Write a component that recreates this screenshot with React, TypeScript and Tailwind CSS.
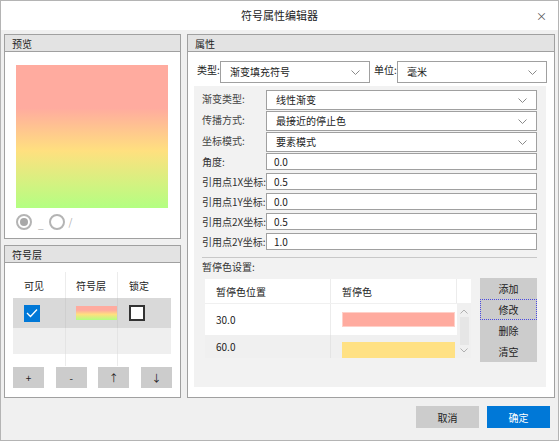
import React from 'react';

const font = { fontFamily: '"Noto Sans CJK SC", "Noto Sans", sans-serif' };

const Chevron: React.FC = () => (
  <svg width="9" height="5" viewBox="0 0 9 5" className="flex-shrink-0">
    <path d="M0.5 0.5 L4.5 4.5 L8.5 0.5" fill="none" stroke="#8a8a8a" strokeWidth="1" />
  </svg>
);

const Combo: React.FC<{ value: string; className?: string }> = ({ value, className = '' }) => (
  <div className={`flex items-center justify-between bg-white border border-[#a0a0a0] pl-[9px] pr-[9px] ${className}`}>
    <span className="text-[10px] text-[#222] leading-none">{value}</span>
    <Chevron />
  </div>
);

const Panel: React.FC<{ title: string; className?: string; children: React.ReactNode }> = ({ title, className = '', children }) => (
  <div className={`flex flex-col border border-[#a0a0a0] bg-white ${className}`}>
    <div className="h-[17px] bg-[#e3e3e3] border-b border-[#a0a0a0] pl-[7px] flex items-center text-[10px] text-[#222] flex-shrink-0">
      {title}
    </div>
    {children}
  </div>
);

const gradient = 'linear-gradient(to bottom, #ffab9f 30%, #ffe07f 60%, #b3ff82 100%)';

const InputRow: React.FC<{ label: string; value: string; className?: string }> = ({ label, value, className = '' }) => (
  <div className={`flex items-center h-[17px] ${className}`}>
    <span className="w-[64px] text-[10px] text-[#333] whitespace-nowrap">{label}</span>
    <div className="w-[271px] h-full bg-white border border-[#a0a0a0] flex items-center pl-[7px] text-[10px] text-[#222]">
      {value}
    </div>
  </div>
);

const ComboRow: React.FC<{ label: string; value: string }> = ({ label, value }) => (
  <div className="flex items-center h-[20px]">
    <span className="w-[64px] text-[10px] text-[#444] self-start pt-[1px]">{label}</span>
    <Combo value={value} className="w-[271px] h-full" />
  </div>
);

const SmallBtn: React.FC<{ label: string }> = ({ label }) => (
  <div className="w-[31px] h-[21px] bg-[#cccccc] flex items-center justify-center text-[10px] text-[#222]">{label}</div>
);

export default function App() {
  return (
    <div style={font} className="w-[559px] h-[441px] border border-[#b4b4b4] bg-[#f0f0f0] flex flex-col overflow-hidden select-none">
      {/* title bar */}
      <div className="h-[29px] bg-white flex items-center justify-center relative flex-shrink-0">
        <span className="text-[11px] text-[#222]">符号属性编辑器</span>
        <span className="absolute right-[11px] top-[7px] text-[11px] text-[#555]">×</span>
      </div>

      <div className="flex pt-[4px] pl-[3px] gap-[6px] h-[368px]">
        {/* left column */}
        <div className="w-[177px] flex flex-col gap-[6px]">
          <Panel title="预览" className="h-[205px]">
            <div className="pt-[13px] pl-[11px]">
              <div className="w-[152px] h-[143px]" style={{ background: gradient }} />
              <div className="flex items-center mt-[6px] h-[16px]">
                <div className="w-[16px] h-[16px] rounded-full border-2 border-[#b4b4b4] flex items-center justify-center">
                  <div className="w-[8px] h-[8px] rounded-full bg-[#a8a8a8]" />
                </div>
                <span className="ml-[6px] text-[10px] text-[#b0b0b0] leading-none mt-[4px]">_</span>
                <div className="ml-[5px] w-[16px] h-[16px] rounded-full border-2 border-[#b4b4b4]" />
                <span className="ml-[4px] text-[10px] text-[#b0b0b0] leading-none">/</span>
              </div>
            </div>
          </Panel>

          <Panel title="符号层" className="h-[153px]">
            <div className="pt-[9px] pl-[8px] pr-[8px]">
              <div className="w-[158px] text-[10px] text-[#222]">
                <div className="grid grid-cols-[53px_52px_53px] h-[26px] bg-white">
                  <div className="flex items-center pl-[11px] border-r border-[#ececec]">可见</div>
                  <div className="flex items-center pl-[10px] border-r border-[#ececec]">符号层</div>
                  <div className="flex items-center pl-[11px]">锁定</div>
                </div>
                <div className="grid grid-cols-[53px_52px_53px] h-[30px] bg-[#d9d9d9]">
                  <div className="flex items-center pl-[11px] border-r border-[#cfcfcf]">
                    <div className="w-[16px] h-[17px] bg-[#0078d7] flex items-center justify-center">
                      <svg width="12" height="10" viewBox="0 0 12 10">
                        <path d="M1 5 L4.5 8.5 L11 1.5" fill="none" stroke="white" strokeWidth="1.3" />
                      </svg>
                    </div>
                  </div>
                  <div className="flex items-center pl-[10px] border-r border-[#cfcfcf]">
                    <div className="w-[43px] h-[14px]" style={{ background: gradient }} />
                  </div>
                  <div className="flex items-center pl-[11px]">
                    <div className="w-[16px] h-[16px] bg-white border-2 border-[#333]" />
                  </div>
                </div>
                <div className="grid grid-cols-[53px_52px_53px] h-[26px] bg-[#efefef]">
                  <div className="border-r border-[#e4e4e4]" />
                  <div className="border-r border-[#e4e4e4]" />
                  <div />
                </div>
                <div className="grid grid-cols-[53px_52px_53px] h-[12px] bg-white">
                  <div className="border-r border-[#ececec]" />
                  <div className="border-r border-[#ececec]" />
                  <div />
                </div>
              </div>
              <div className="flex justify-between w-[159px] mt-[1px]">
                <SmallBtn label="+" />
                <SmallBtn label="-" />
                <SmallBtn label="↑" />
                <SmallBtn label="↓" />
              </div>
            </div>
          </Panel>
        </div>

        {/* right column */}
        <Panel title="属性" className="w-[368px] h-[364px]">
          <div className="pt-[9px] pl-[9px] flex flex-col">
            <div className="flex items-center h-[22px]">
              <span className="w-[23px] text-[10px] text-[#222] self-start pt-[1px] whitespace-nowrap">类型:</span>
              <Combo value="渐变填充符号" className="w-[150px] h-full" />
              <span className="ml-[4px] w-[23px] text-[10px] text-[#222] self-start pt-[1px] whitespace-nowrap">单位:</span>
              <Combo value="毫米" className="w-[150px] h-full" />
            </div>

            <div className="mt-[3px] ml-[-3px] w-[352px] h-[301px] bg-[#f2f2f2] pt-[4px] pl-[8px] flex flex-col">
              <div className="flex flex-col gap-[1px]">
                <ComboRow label="渐变类型:" value="线性渐变" />
                <ComboRow label="传播方式:" value="最接近的停止色" />
                <ComboRow label="坐标模式:" value="要素模式" />
              </div>
              <InputRow label="角度:" value="0.0" className="mt-[1px]" />
              <InputRow label="引用点1X坐标:" value="0.5" className="mt-[3px]" />
              <InputRow label="引用点1Y坐标:" value="0.0" className="mt-[3px]" />
              <InputRow label="引用点2X坐标:" value="0.5" className="mt-[3px]" />
              <InputRow label="引用点2Y坐标:" value="1.0" className="mt-[3px]" />
              <div className="mt-[7px] w-[335px] h-[1px] bg-[#c8c8c8]" />
              <div className="mt-[1px] text-[10px] text-[#333] leading-[16px]">暂停色设置:</div>

              <div className="flex mt-[4px] ml-[3px]">
                <div className="w-[266px] h-[79px] bg-white text-[10px] text-[#222] flex flex-col">
                  <div className="flex h-[25px] border-b border-[#f0f0f0]">
                    <div className="w-[126px] flex items-center pl-[11px] border-r border-[#ececec]">暂停色位置</div>
                    <div className="w-[126px] flex items-center pl-[11px] border-r border-[#ececec]">暂停色</div>
                    <div className="flex-1" />
                  </div>
                  <div className="flex flex-1">
                    <div className="flex-1 flex flex-col">
                      <div className="flex h-[31px] bg-white">
                        <div className="w-[126px] flex items-center pl-[11px] border-r border-[#ececec]">30.0</div>
                        <div className="w-[126px] flex items-center pl-[11px]">
                          <div className="w-[113px] h-[15px] bg-[#ffab9f] border border-[#ffd0c8]" />
                        </div>
                      </div>
                      <div className="flex flex-1 bg-[#f0f0f0]">
                        <div className="w-[126px] flex items-center pl-[11px] border-r border-[#e4e4e4]">60.0</div>
                        <div className="w-[126px] flex items-end pl-[11px]">
                          <div className="w-[113px] h-[16px] bg-[#ffe184]" />
                        </div>
                      </div>
                    </div>
                    <div className="w-[14px] bg-[#f0f0f0] flex flex-col items-center justify-between py-[5px]">
                      <svg width="8" height="5" viewBox="0 0 8 5">
                        <path d="M0.5 4.5 L4 1 L7.5 4.5" fill="none" stroke="#b0b0b0" strokeWidth="1" />
                      </svg>
                      <div className="w-[9px] flex-1 my-[3px] bg-[#e6e6e6]" />
                      <svg width="8" height="5" viewBox="0 0 8 5">
                        <path d="M0.5 0.5 L4 4 L7.5 0.5" fill="none" stroke="#b0b0b0" strokeWidth="1" />
                      </svg>
                    </div>
                  </div>
                </div>

                <div className="ml-[9px] -mt-[1px] w-[57px] h-[84px] bg-[#cccccc] flex flex-col text-[10px] text-[#222]">
                  <div className="h-[21px] flex items-center justify-center">添加</div>
                  <div className="h-[21px] flex items-center justify-center border border-dotted border-[#4a4ae0]">修改</div>
                  <div className="h-[21px] flex items-center justify-center">删除</div>
                  <div className="h-[21px] flex items-center justify-center">清空</div>
                </div>
              </div>
            </div>
          </div>
        </Panel>
      </div>

      {/* footer */}
      <div className="flex justify-end pr-[8px] gap-[8px] mt-[8px]">
        <div className="w-[63px] h-[22px] bg-[#cccccc] flex items-center justify-center text-[10px] text-[#222]">取消</div>
        <div className="w-[63px] h-[22px] bg-[#0078d7] flex items-center justify-center text-[10px] text-white">确定</div>
      </div>
    </div>
  );
}
